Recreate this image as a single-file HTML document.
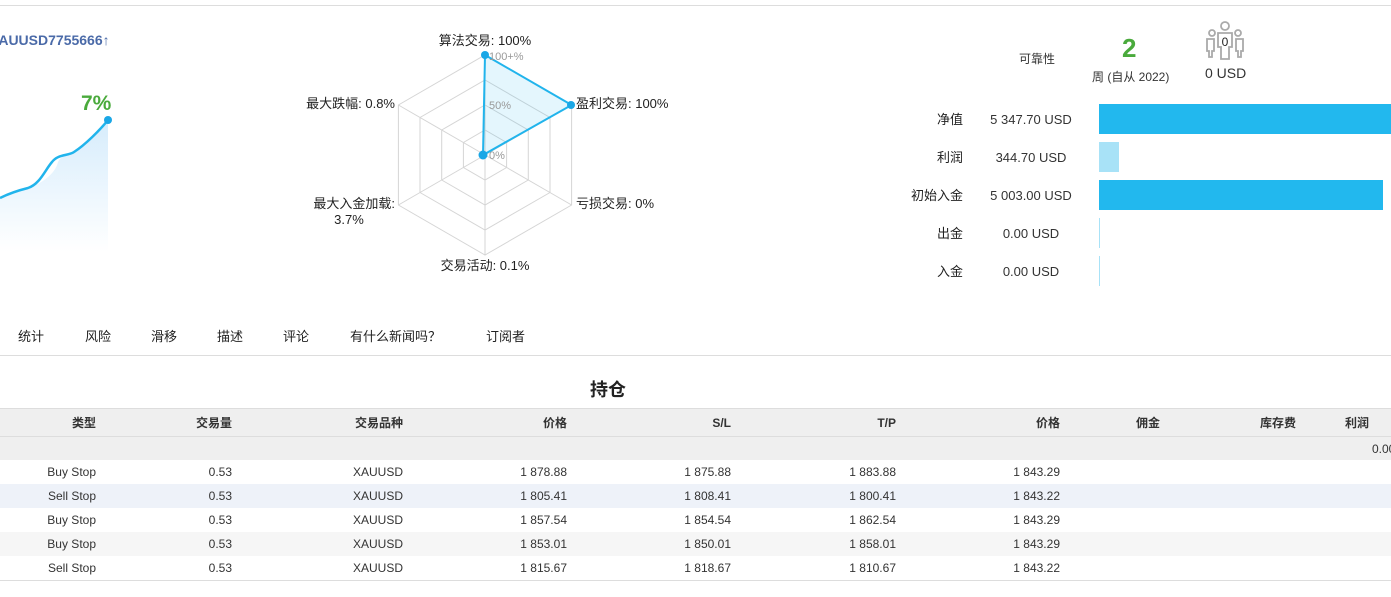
<!DOCTYPE html><html><head><meta charset="utf-8"><style>
body{margin:0;width:1391px;height:597px;overflow:hidden;background:#fff;font-family:"Liberation Sans","Noto Sans CJK SC",sans-serif;color:#222;position:relative}
.a{position:absolute;white-space:nowrap}
.r{text-align:right}
.tab{position:absolute;top:326px;font-size:13px}
table{position:absolute;left:0;top:408px;border-collapse:collapse;font-size:12px;width:1420px}
td{height:24px;padding:0;text-align:right;color:#333}
tr.h td{height:27px;background:#efefef;font-weight:bold;border-top:1px solid #ddd;border-bottom:1px solid #ddd}
tr.s td{background:#efefef;height:23px}
tr.b td{background:#eef2f9}
tr.g td{background:#f6f6f6}
</style></head><body>
<div class="a" style="left:0;top:5px;width:1391px;border-top:1px solid #ddd"></div>
<div class="a" style="left:-11px;top:32px;font-size:14px;font-weight:bold;color:#4a6aa8">XAUUSD7755666↑</div>
<div class="a" style="left:81px;top:92px;font-size:21px;font-weight:bold;color:#4aaa3c">7%</div>
<svg class="a" style="left:0;top:0" width="130" height="260"><defs><linearGradient id="g" x1="0" y1="0" x2="0" y2="1"><stop offset="0" stop-color="#d6ecfc"/><stop offset="1" stop-color="#fff"/></linearGradient></defs>
<path d="M0 198 C10 193 20 190 28 188 C40 184 55 175 58 162 C62 154 70 155 74 152 C85 145 100 130 108 120 L108 252 L0 252Z" fill="url(#g)"/>
<path d="M0 198 C10 193 20 190 28 188 C40 184 45 170 52 162 C58 154 68 156 74 152 C85 145 100 130 108 120" fill="none" stroke="#21b4ec" stroke-width="2.5"/><circle cx="108" cy="120" r="4" fill="#1aa7e6"/></svg>
<svg class="a" style="left:0;top:0" width="700" height="300" font-size="13" font-family="Liberation Sans,Noto Sans CJK SC,sans-serif">
<g fill="none" stroke="#d5d5d5">
<polygon points="485,55 571.6,105 571.6,205 485,255 398.4,205 398.4,105"/>
<polygon points="485,80 550,117.5 550,192.5 485,230 420,192.5 420,117.5"/>
<polygon points="485,105 528.3,130 528.3,180 485,205 441.7,180 441.7,130"/>
<polygon points="485,130 506.6,142.5 506.6,167.5 485,180 463.4,167.5 463.4,142.5"/>
<path d="M485 155V55M485 155L571.6 105M485 155L571.6 205M485 155V255M485 155L398.4 205M485 155L398.4 105"/></g>
<polygon points="485,55 571.6,105 483,155" fill="rgba(33,180,236,0.12)" stroke="#21b4ec" stroke-width="2"/>
<circle cx="485" cy="55" r="4" fill="#1aa7e6"/><circle cx="571" cy="105" r="4" fill="#1aa7e6"/><circle cx="483" cy="155" r="4.5" fill="#1aa7e6"/>
<g fill="#999" font-size="11"><text x="489" y="60">100+%</text><text x="489" y="109">50%</text><text x="489" y="159">0%</text></g>
<g fill="#222"><text x="485" y="45" text-anchor="middle">算法交易: 100%</text><text x="576" y="108">盈利交易: 100%</text><text x="576" y="208">亏损交易: 0%</text><text x="485" y="270" text-anchor="middle">交易活动: 0.1%</text><text x="395" y="108" text-anchor="end">最大跌幅: 0.8%</text><text x="395" y="208" text-anchor="end">最大入金加载:</text><text x="349" y="224" text-anchor="middle">3.7%</text></g></svg>
<div class="a" style="left:1019px;top:50px;font-size:12px;color:#333">可靠性</div>
<div class="a" style="left:1122px;top:33px;font-size:26px;font-weight:bold;color:#4aaa3c">2</div>
<div class="a" style="left:1092px;top:68px;font-size:12px;color:#333">周 (自从 2022)</div>
<svg class="a" style="left:1205px;top:21px" width="40" height="40" fill="none" stroke="#aaa" stroke-width="1.8"><circle cx="20" cy="5" r="4"/><circle cx="7" cy="12" r="3"/><circle cx="33" cy="12" r="3"/><path d="M13 12h14v14h-3v12h-8V26h-3z"/><path d="M2 18h7v12h-2v6H4v-6H2z"/><path d="M31 18h7v12h-2v6h-3v-6h-2z"/><text x="20" y="25" font-size="12" fill="#222" stroke="none" text-anchor="middle" font-family="Liberation Sans">0</text></svg>
<div class="a" style="left:1205px;top:65px;font-size:14px;color:#333">0 USD</div>
<div class="a r" style="left:880px;width:83px;top:110px;font-size:13px;line-height:19px">净值<br><br>利润<br><br>初始入金<br><br>出金<br><br>入金</div>
<div class="a" style="left:970px;width:122px;text-align:center;top:110px;font-size:13px;line-height:19px;color:#333">5 347.70 USD<br><br>344.70 USD<br><br>5 003.00 USD<br><br>0.00 USD<br><br>0.00 USD</div>
<div class="a" style="left:1099px;top:104px;width:292px;height:30px;background:#22b8ee"></div>
<div class="a" style="left:1099px;top:142px;width:20px;height:30px;background:#a8e2f7"></div>
<div class="a" style="left:1099px;top:180px;width:284px;height:30px;background:#22b8ee"></div>
<div class="a" style="left:1099px;top:218px;width:1px;height:30px;background:#a8e2f7"></div>
<div class="a" style="left:1099px;top:256px;width:1px;height:30px;background:#a8e2f7"></div>
<div class="tab" style="left:18px">统计</div><div class="tab" style="left:85px">风险</div><div class="tab" style="left:151px">滑移</div><div class="tab" style="left:217px">描述</div><div class="tab" style="left:283px">评论</div><div class="tab" style="left:350px">有什么新闻吗？</div><div class="tab" style="left:486px">订阅者</div>
<div class="a" style="left:0;top:355px;width:1391px;border-top:1px solid #ddd"></div>
<div class="a" style="left:590px;top:376px;font-size:18px;font-weight:bold">持仓</div>
<table>
<colgroup><col style="width:96px"><col style="width:136px"><col style="width:171px"><col style="width:164px"><col style="width:164px"><col style="width:165px"><col style="width:164px"><col style="width:100px"><col style="width:136px"><col style="width:124px"></colgroup>
<tr class="h"><td>类型</td><td>交易量</td><td>交易品种</td><td>价格</td><td>S/L</td><td>T/P</td><td>价格</td><td>佣金</td><td>库存费</td><td style="text-align:left;padding-left:49px">利润</td></tr>
<tr class="s"><td></td><td></td><td></td><td></td><td></td><td></td><td></td><td></td><td></td><td style="text-align:left;padding-left:76px">0.00</td></tr>
<tr><td>Buy Stop</td><td>0.53</td><td>XAUUSD</td><td>1 878.88</td><td>1 875.88</td><td>1 883.88</td><td>1 843.29</td><td></td><td></td><td></td></tr>
<tr class="b"><td>Sell Stop</td><td>0.53</td><td>XAUUSD</td><td>1 805.41</td><td>1 808.41</td><td>1 800.41</td><td>1 843.22</td><td></td><td></td><td></td></tr>
<tr><td>Buy Stop</td><td>0.53</td><td>XAUUSD</td><td>1 857.54</td><td>1 854.54</td><td>1 862.54</td><td>1 843.29</td><td></td><td></td><td></td></tr>
<tr class="g"><td>Buy Stop</td><td>0.53</td><td>XAUUSD</td><td>1 853.01</td><td>1 850.01</td><td>1 858.01</td><td>1 843.29</td><td></td><td></td><td></td></tr>
<tr><td>Sell Stop</td><td>0.53</td><td>XAUUSD</td><td>1 815.67</td><td>1 818.67</td><td>1 810.67</td><td>1 843.22</td><td></td><td></td><td></td></tr>
</table>
<div class="a" style="left:0;top:580px;width:1391px;border-top:1px solid #ddd"></div>
</body></html>
